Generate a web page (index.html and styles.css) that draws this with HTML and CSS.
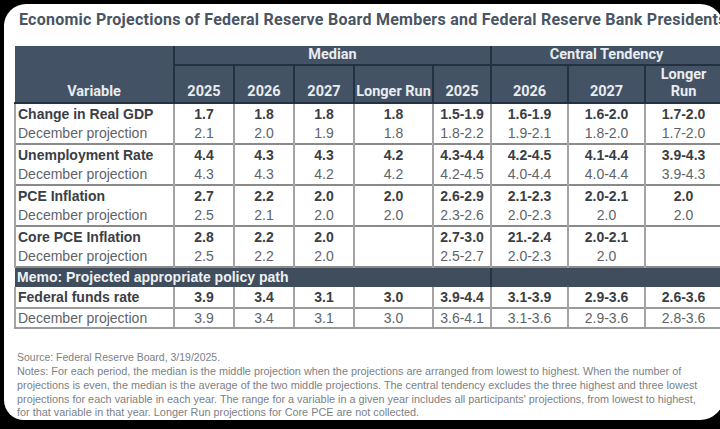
FILE: index.html
```html
<!DOCTYPE html>
<html>
<head>
<meta charset="utf-8">
<link rel="stylesheet" href="styles.css">
</head>
<body>
<div class="card">
  <h1 class="title">Economic Projections of Federal Reserve Board Members and Federal Reserve Bank Presidents</h1>
  <table class="proj">
    <colgroup>
      <col class="c-var"><col class="c-yr"><col class="c-yr"><col class="c-yr"><col class="c-lr"><col class="c-ct25"><col class="c-ct"><col class="c-ct"><col class="c-ct">
    </colgroup>
    <thead>
      <tr class="h1">
        <th rowspan="2" class="hvar">Variable</th>
        <th colspan="5" class="hgrp">Median</th>
        <th colspan="3" class="hgrp">Central Tendency</th>
      </tr>
      <tr class="h2">
        <th>2025</th><th>2026</th><th>2027</th><th>Longer Run</th><th>2025</th><th>2026</th><th>2027</th><th class="two">Longer<br>Run</th>
      </tr>
    </thead>
    <tbody>
      <tr class="main first"><td class="lbl">Change in Real GDP</td><td>1.7</td><td>1.8</td><td>1.8</td><td>1.8</td><td>1.5-1.9</td><td>1.6-1.9</td><td>1.6-2.0</td><td>1.7-2.0</td></tr>
      <tr class="dec"><td class="lbl">December projection</td><td>2.1</td><td>2.0</td><td>1.9</td><td>1.8</td><td>1.8-2.2</td><td>1.9-2.1</td><td>1.8-2.0</td><td>1.7-2.0</td></tr>
      <tr class="main"><td class="lbl">Unemployment Rate</td><td>4.4</td><td>4.3</td><td>4.3</td><td>4.2</td><td>4.3-4.4</td><td>4.2-4.5</td><td>4.1-4.4</td><td>3.9-4.3</td></tr>
      <tr class="dec"><td class="lbl">December projection</td><td>4.3</td><td>4.3</td><td>4.2</td><td>4.2</td><td>4.2-4.5</td><td>4.0-4.4</td><td>4.0-4.4</td><td>3.9-4.3</td></tr>
      <tr class="main"><td class="lbl">PCE Inflation</td><td>2.7</td><td>2.2</td><td>2.0</td><td>2.0</td><td>2.6-2.9</td><td>2.1-2.3</td><td>2.0-2.1</td><td>2.0</td></tr>
      <tr class="dec"><td class="lbl">December projection</td><td>2.5</td><td>2.1</td><td>2.0</td><td>2.0</td><td>2.3-2.6</td><td>2.0-2.3</td><td>2.0</td><td>2.0</td></tr>
      <tr class="main"><td class="lbl">Core PCE Inflation</td><td>2.8</td><td>2.2</td><td>2.0</td><td></td><td>2.7-3.0</td><td>21.-2.4</td><td>2.0-2.1</td><td></td></tr>
      <tr class="dec"><td class="lbl">December projection</td><td>2.5</td><td>2.2</td><td>2.0</td><td></td><td>2.5-2.7</td><td>2.0-2.3</td><td>2.0</td><td></td></tr>
      <tr class="memo"><td colspan="6" class="memo-a">Memo: Projected appropriate policy path</td><td colspan="3" class="memo-b"></td></tr>
      <tr class="main fed"><td class="lbl">Federal funds rate</td><td>3.9</td><td>3.4</td><td>3.1</td><td>3.0</td><td>3.9-4.4</td><td>3.1-3.9</td><td>2.9-3.6</td><td>2.6-3.6</td></tr>
      <tr class="dec fed-dec"><td class="lbl">December projection</td><td>3.9</td><td>3.4</td><td>3.1</td><td>3.0</td><td>3.6-4.1</td><td>3.1-3.6</td><td>2.9-3.6</td><td>2.8-3.6</td></tr>
    </tbody>
  </table>
  <div class="notes">
    <p class="src">Source: Federal Reserve Board, 3/19/2025.</p>
    <p class="ln">Notes: For each period, the median is the middle projection when the projections are arranged from lowest to highest. When the number of</p>
    <p class="ln">projections is even, the median is the average of the two middle projections. The central tendency excludes the three highest and three lowest</p>
    <p class="ln">projections for each variable in each year. The range for a variable in a given year includes all participants' projections, from lowest to highest,</p>
    <p class="ln">for that variable in that year. Longer Run projections for Core PCE are not collected.</p>
  </div>
</div>
</body>
</html>
```
FILE: styles.css
```css
html, body {
  margin: 0;
  padding: 0;
  background: #000;
  overflow: hidden;
}
body {
  width: 720px;
  height: 429px;
  padding: 4px 0 0 4px;
  box-sizing: border-box;
}
.card {
  width: 720px;
  height: 416px;
  background: #fff;
  border-radius: 22px 24px 24px 20px;
  overflow: hidden;
  padding: 6px 0 0 10px;
  box-sizing: border-box;
}
.title {
  margin: 0 0 16px 5px;
  font-family: Roboto, "Liberation Sans", sans-serif;
  font-weight: 700;
  font-size: 16px;
  letter-spacing: 0.25px;
  line-height: 20px;
  color: #4a5563;
  white-space: nowrap;
}
.proj {
  border-collapse: collapse;
  table-layout: fixed;
  width: 705px;
  font-family: "Liberation Sans", Arial, sans-serif;
  font-size: 14px;
}
.c-var { width: 159px; }
.c-yr { width: 60px; }
.c-lr { width: 79px; }
.c-ct25 { width: 58px; }
.c-ct { width: 77px; }

thead th {
  background: #435264;
  color: #e8ecf0;
  font-family: Roboto, "Liberation Sans", sans-serif;
  font-weight: 700;
  font-size: 14.5px;
  padding: 0;
  border: 2px solid #233140;
  border-top: none;
}
.h1 th { height: 18px; line-height: 18px; }
.h1 th.hvar {
  border-left: none;
  border-bottom: 2px solid #233140;
  vertical-align: bottom;
  line-height: 17px;
  padding-bottom: 2px;
}
.h1 th.hgrp { border-bottom: 2px solid #233140; }
.h2 th {
  height: 34px;
  vertical-align: bottom;
  line-height: 17px;
  padding-bottom: 2px;
}
.h2 th.two { line-height: 17px; }

tbody td {
  padding: 0;
  text-align: center;
  border-left: 2px solid #a4a4a4;
  border-right: 2px solid #a4a4a4;
  white-space: nowrap;
}
tbody td.lbl {
  text-align: left;
  padding-left: 2px;
}
tr.main td {
  height: 20px;
  line-height: 20px;
  font-weight: 700;
  color: #3b3e44;
  border-top: 2px solid #8a8a8a;
}
tr.main.first td { border-top: 2px solid #233140; }
tr.dec td {
  height: 19px;
  line-height: 19px;
  color: #5f6369;
}
tr.memo td {
  background: #3f4d5c;
  height: 19px;
  line-height: 19px;
  color: #eef1f4;
  font-weight: 700;
  text-align: left;
  padding-left: 2px;
  border-top: 2px solid #8a8a8a;
  border-left: none;
  border-right: none;
}
tr.memo td.memo-b { border-left: 2px solid #27343f; }
tr.fed td { border-top: none; }
tr.fed-dec td {
  border-top: 2px solid #9a9a9a;
  border-bottom: 2px solid #9a9a9a;
  height: 18px;
  line-height: 18px;
}

.notes {
  margin: 22px 0 0 3px;
  font-family: "Liberation Sans", Arial, sans-serif;
  font-size: 10.5px;
  color: #7b7f86;
  white-space: nowrap;
}
.notes p {
  margin: 0;
  line-height: 13.7px;
}
.notes .ln { font-size: 10.85px; }
.notes .src { margin-bottom: 0.5px; }
```
